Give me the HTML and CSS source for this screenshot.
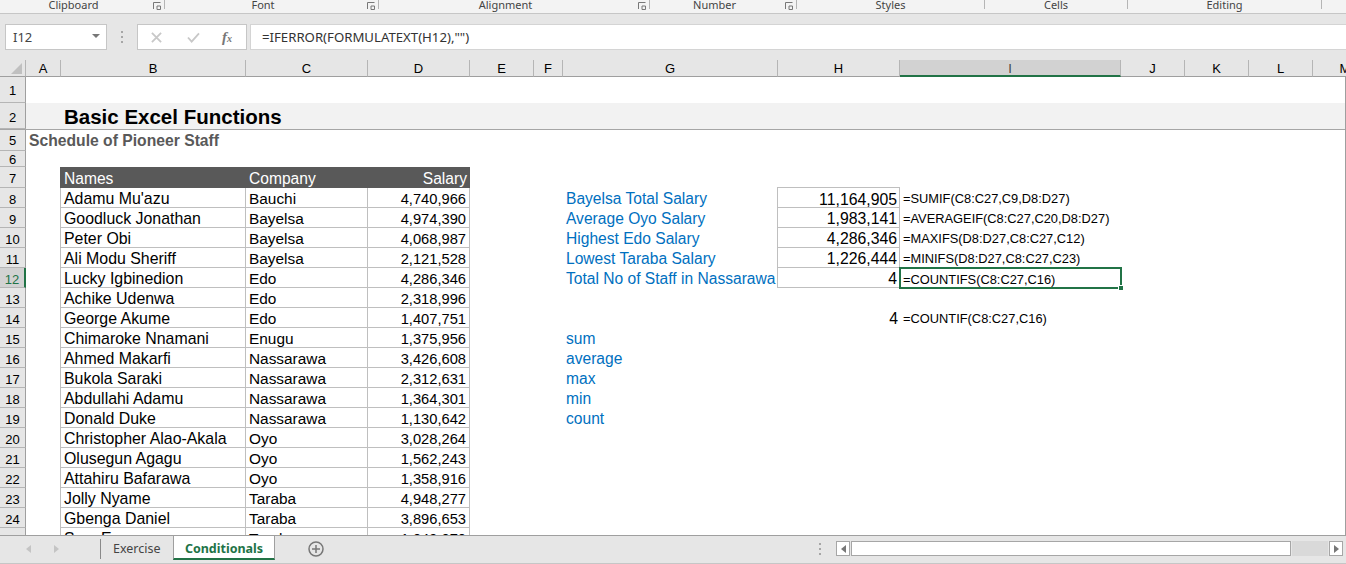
FILE: index.html
```html
<!DOCTYPE html>
<html lang="en">
<head>
    <meta charset="UTF-8">
    <title>Basic Excel Functions</title>
    <link rel="stylesheet" href="styles.css">
</head>
<body>
    <!-- Ribbon group labels -->
    <div class="ribbon">
        <div class="group launch g-clipboard">Clipboard<svg class="launcher" viewBox="0 0 8 8"><path d="M0.5 7V0.5H7.5M4 4H7.5V7.5H4Z"/></svg></div>
        <div class="group launch g-font">Font<svg class="launcher" viewBox="0 0 8 8"><path d="M0.5 7V0.5H7.5M4 4H7.5V7.5H4Z"/></svg></div>
        <div class="group launch g-alignment">Alignment<svg class="launcher" viewBox="0 0 8 8"><path d="M0.5 7V0.5H7.5M4 4H7.5V7.5H4Z"/></svg></div>
        <div class="group launch g-number">Number<svg class="launcher" viewBox="0 0 8 8"><path d="M0.5 7V0.5H7.5M4 4H7.5V7.5H4Z"/></svg></div>
        <div class="group g-styles">Styles</div>
        <div class="group g-cells">Cells</div>
        <div class="group g-editing">Editing</div>
    </div>

    <!-- Formula bar -->
    <div class="formula-bar">
        <div class="name-box">I12<span class="caret"></span></div>
        <div class="dots"><i></i><i></i><i></i></div>
        <div class="fx-buttons">
            <svg class="btn-icon" viewBox="0 0 12 12"><path d="M1 1L11 11M11 1L1 11"/></svg>
            <svg class="btn-icon" viewBox="0 0 14 12"><path d="M1 6L5 10.500L13 1.500"/></svg>
            <span class="fx">f<sub>x</sub></span>
        </div>
        <div class="formula-input">=IFERROR(FORMULATEXT(H12),"")</div>
    </div>

    <!-- Column headers -->
    <div class="row col-heads">
        <div class="corner"><svg viewBox="0 0 10 10"><polygon points="10,0 10,10 0,10"/></svg></div>
        <div class="ch">A</div><div class="ch">B</div><div class="ch">C</div><div class="ch">D</div>
        <div class="ch">E</div><div class="ch">F</div><div class="ch">G</div><div class="ch">H</div>
        <div class="ch selected">I</div><div class="ch">J</div><div class="ch">K</div><div class="ch">L</div>
        <div class="ch last">M</div>
    </div>

    <div class="sheet">
        <div class="row r1"><div class="rh">1</div></div>
        <div class="row r2"><div class="rh">2</div><div class="title">Basic Excel Functions</div></div>
        <div class="row r5"><div class="rh">5</div><div class="subtitle">Schedule of Pioneer Staff</div></div>
        <div class="row r6"><div class="rh">6</div></div>
        <div class="row r7"><div class="rh">7</div>
            <div class="th cb">Names</div><div class="th cc">Company</div><div class="th cd">Salary</div>
        </div>

        <div class="row"><div class="rh">8</div>
            <div class="td cb">Adamu Mu'azu</div><div class="td cc">Bauchi</div><div class="td cd">4,740,966</div>
            <div class="label cg">Bayelsa Total Salary</div><div class="box ch-col first">11,164,905</div><div class="formula ci">=SUMIF(C8:C27,C9,D8:D27)</div>
        </div>
        <div class="row"><div class="rh">9</div>
            <div class="td cb">Goodluck Jonathan</div><div class="td cc">Bayelsa</div><div class="td cd">4,974,390</div>
            <div class="label cg">Average Oyo Salary</div><div class="box ch-col">1,983,141</div><div class="formula ci">=AVERAGEIF(C8:C27,C20,D8:D27)</div>
        </div>
        <div class="row"><div class="rh">10</div>
            <div class="td cb">Peter Obi</div><div class="td cc">Bayelsa</div><div class="td cd">4,068,987</div>
            <div class="label cg">Highest Edo Salary</div><div class="box ch-col">4,286,346</div><div class="formula ci">=MAXIFS(D8:D27,C8:C27,C12)</div>
        </div>
        <div class="row"><div class="rh">11</div>
            <div class="td cb">Ali Modu Sheriff</div><div class="td cc">Bayelsa</div><div class="td cd">2,121,528</div>
            <div class="label cg">Lowest Taraba Salary</div><div class="box ch-col">1,226,444</div><div class="formula ci">=MINIFS(D8:D27,C8:C27,C23)</div>
        </div>
        <div class="row"><div class="rh selected">12</div>
            <div class="td cb">Lucky Igbinedion</div><div class="td cc">Edo</div><div class="td cd">4,286,346</div>
            <div class="label cg">Total No of Staff in Nassarawa</div><div class="box ch-col">4</div>
            <div class="formula ci active">=COUNTIFS(C8:C27,C16)<span class="handle"></span></div>
        </div>
        <div class="row"><div class="rh">13</div>
            <div class="td cb">Achike Udenwa</div><div class="td cc">Edo</div><div class="td cd">2,318,996</div>
        </div>
        <div class="row"><div class="rh">14</div>
            <div class="td cb">George Akume</div><div class="td cc">Edo</div><div class="td cd">1,407,751</div>
            <div class="plain ch-col">4</div><div class="formula ci">=COUNTIF(C8:C27,C16)</div>
        </div>
        <div class="row"><div class="rh">15</div>
            <div class="td cb">Chimaroke Nnamani</div><div class="td cc">Enugu</div><div class="td cd">1,375,956</div>
            <div class="label cg">sum</div>
        </div>
        <div class="row"><div class="rh">16</div>
            <div class="td cb">Ahmed Makarfi</div><div class="td cc">Nassarawa</div><div class="td cd">3,426,608</div>
            <div class="label cg">average</div>
        </div>
        <div class="row"><div class="rh">17</div>
            <div class="td cb">Bukola Saraki</div><div class="td cc">Nassarawa</div><div class="td cd">2,312,631</div>
            <div class="label cg">max</div>
        </div>
        <div class="row"><div class="rh">18</div>
            <div class="td cb">Abdullahi Adamu</div><div class="td cc">Nassarawa</div><div class="td cd">1,364,301</div>
            <div class="label cg">min</div>
        </div>
        <div class="row"><div class="rh">19</div>
            <div class="td cb">Donald Duke</div><div class="td cc">Nassarawa</div><div class="td cd">1,130,642</div>
            <div class="label cg">count</div>
        </div>
        <div class="row"><div class="rh">20</div>
            <div class="td cb">Christopher Alao-Akala</div><div class="td cc">Oyo</div><div class="td cd">3,028,264</div>
        </div>
        <div class="row"><div class="rh">21</div>
            <div class="td cb">Olusegun Agagu</div><div class="td cc">Oyo</div><div class="td cd">1,562,243</div>
        </div>
        <div class="row"><div class="rh">22</div>
            <div class="td cb">Attahiru Bafarawa</div><div class="td cc">Oyo</div><div class="td cd">1,358,916</div>
        </div>
        <div class="row"><div class="rh">23</div>
            <div class="td cb">Jolly Nyame</div><div class="td cc">Taraba</div><div class="td cd">4,948,277</div>
        </div>
        <div class="row"><div class="rh">24</div>
            <div class="td cb">Gbenga Daniel</div><div class="td cc">Taraba</div><div class="td cd">3,896,653</div>
        </div>
        <div class="row"><div class="rh">25</div>
            <div class="td cb">Sam Egwu</div><div class="td cc">Taraba</div><div class="td cd">1,049,070</div>
        </div>
    </div>

    <!-- Sheet tabs and scrollbar -->
    <div class="status">
        <svg class="nav-arrow" viewBox="0 0 5 8"><polygon points="5,0 5,8 0,4"/></svg>
        <svg class="nav-arrow" viewBox="0 0 5 8"><polygon points="0,0 0,8 5,4"/></svg>
        <div class="tab">Exercise</div>
        <div class="tab active">Conditionals</div>
        <svg class="add-sheet" viewBox="0 0 16 16"><circle cx="8" cy="8" r="7"/><path d="M8 4V12M4 8H12"/></svg>
        <div class="dots status-dots"><i></i><i></i><i></i></div>
        <div class="scrollbar">
            <div class="scroll-btn"><svg viewBox="0 0 5 8"><polygon points="5,0 5,8 0,4"/></svg></div>
            <div class="thumb"></div>
            <div class="track"></div>
            <div class="scroll-btn"><svg viewBox="0 0 5 8"><polygon points="0,0 0,8 5,4"/></svg></div>
        </div>
    </div>
</body>
</html>
```

FILE: styles.css
```css
* {
    box-sizing: border-box;
}

html, body {
    height: 100%;
}

body {
    margin: 0;
    display: flex;
    flex-direction: column;
    overflow: hidden;
    background-color: #e6e6e6;
    font-family: "Liberation Sans", Arial, sans-serif;
    font-size: 15.6px;
    color: #000;
}

/* ribbon */
.ribbon {
    display: flex;
    height: 14px;
    background-color: #f3f3f3;
    border-bottom: 1px solid #c6c6c6;
    font-family: "Noto Sans", sans-serif;
    font-size: 11px;
    line-height: 9px;
    color: #444;
}

.group {
    position: relative;
    height: 9px;
    border-right: 1px solid #b5b5b5;
    text-align: center;
    white-space: nowrap;
}

.group.launch {
    padding-right: 17px;
}

.g-clipboard { width: 165px; }
.g-font { width: 214px; }
.g-alignment { width: 271px; }
.g-number { width: 147px; }
.g-styles { width: 188px; }
.g-cells { width: 143px; }
.g-editing { width: 194px; }

.launcher {
    position: absolute;
    right: 3px;
    top: 2px;
    width: 8px;
    height: 8px;
    fill: none;
    stroke: #777;
    stroke-width: 1;
}

/* formula bar */
.formula-bar {
    display: flex;
    height: 46px;
    padding: 10px 0 10px 5px;
}

.name-box {
    position: relative;
    width: 102px;
    height: 26px;
    padding: 0 0 0 7px;
    background-color: #fff;
    border: 1px solid #c6c6c6;
    font-family: "Noto Sans", sans-serif;
    font-size: 13px;
    line-height: 24px;
    color: #444;
}

.caret {
    position: absolute;
    right: 6px;
    top: 9px;
    border-left: 4px solid transparent;
    border-right: 4px solid transparent;
    border-top: 4px solid #777;
}

.dots {
    display: flex;
    flex-direction: column;
    gap: 3px;
    width: 30px;
    align-items: center;
    justify-content: center;
}

.dots i {
    width: 2px;
    height: 2px;
    background-color: #a6a6a6;
}

.fx-buttons {
    display: flex;
    align-items: center;
    width: 110px;
    height: 26px;
    padding-left: 13px;
    background-color: #fff;
    border: 1px solid #c6c6c6;
}

.btn-icon {
    width: 11px;
    height: 11px;
    margin-right: 25px;
    fill: none;
    stroke: #c8c8c8;
    stroke-width: 2;
}

.btn-icon + .btn-icon {
    width: 13px;
    margin-right: 22px;
}

.fx {
    font-family: "Liberation Serif", serif;
    font-style: italic;
    font-weight: bold;
    font-size: 15px;
    color: #777;
}

.fx sub {
    font-size: 10px;
    vertical-align: baseline;
}

.formula-input {
    flex: 1;
    height: 26px;
    margin-left: 3px;
    padding-left: 11px;
    background-color: #fff;
    border: 1px solid #d4d4d4;
    border-right: 0;
    font-family: "Noto Sans", sans-serif;
    font-size: 13.2px;
    line-height: 24px;
    color: #333;
}

/* shared column grid */
.row {
    display: grid;
    grid-template-columns: 26px 35px 185px 122px 102px 64px 29px 215px 122px 221px 64px 64px 64px 64px;
    grid-template-rows: 100%;
    height: 20px;
}

.cb { grid-column: 3; }
.cc { grid-column: 4; }
.cd { grid-column: 5; }
.cg { grid-column: 8; }
.ch-col { grid-column: 9; }
.ci { grid-column: 10; }

/* column headers */
.col-heads {
    flex: none;
    height: 17px;
    overflow: hidden;
    background-color: #e6e6e6;
}

.corner {
    display: flex;
    align-items: flex-end;
    justify-content: flex-end;
    padding: 0 3px 2px 0;
    border-right: 1px solid #b5b5b5;
    border-bottom: 1px solid #9f9f9f;
}

.corner svg {
    width: 11px;
    height: 11px;
    fill: #c0c0c0;
}

.ch {
    border-right: 1px solid #b5b5b5;
    border-bottom: 1px solid #9f9f9f;
    text-align: center;
    font-size: 13px;
    line-height: 17px;
    overflow: hidden;
}

.ch.selected {
    background-color: #d2d2d2;
    border-bottom: 2px solid #217346;
    color: #444;
}

.ch.last {
    border-right: 0;
}

/* sheet */
.sheet {
    flex: 1;
    min-height: 0;
    overflow: hidden;
    background-color: #fff;
    border-right: 1px solid #9f9f9f;
}

.rh {
    background-color: #e6e6e6;
    border-right: 1px solid #9f9f9f;
    border-bottom: 1px solid #b5b5b5;
    text-align: center;
    font-size: 13px;
    line-height: 23px;
}

.rh.selected {
    background-color: #d2d2d2;
    border-right: 2px solid #217346;
    color: #217346;
}

.r1 { height: 26px; }
.r2 { height: 27px; background-color: #f2f2f2; border-bottom: 1px solid #a6a6a6; }
.r5 { height: 21px; }
.r6 { height: 16px; }
.r7 { height: 21px; }

.r1 .rh { line-height: 27px; }
.r2 .rh { line-height: 29px; }
.r5 .rh { line-height: 22px; }
.r6 .rh { line-height: 17px; }
.r7 .rh { line-height: 24px; }

.title {
    grid-column: 3 / 7;
    padding-left: 3px;
    font-size: 20.5px;
    font-weight: bold;
    line-height: 27px;
}

.subtitle {
    grid-column: 2 / 6;
    padding-left: 3px;
    font-size: 15.7px;
    font-weight: bold;
    line-height: 22px;
    color: #595959;
    white-space: nowrap;
}

.th, .td, .box, .plain, .label, .formula {
    padding: 0 3px;
    line-height: 22px;
    white-space: nowrap;
}

.th {
    background-color: #595959;
    line-height: 24px;
    color: #fff;
}

.th.cb {
    margin-left: -1px;
    padding-left: 4px;
}

.td {
    border-right: 1px solid #bfbfbf;
    border-bottom: 1px solid #bfbfbf;
}

.td.cb {
    margin-left: -1px;
    font-size: 15.900px;
    border-left: 1px solid #bfbfbf;
}

.td.cc {
    font-size: 15.400px;
}

.cd {
    text-align: right;
}

.td.cd {
    font-size: 14.700px;
}

.box, .plain {
    padding-right: 2px;
    text-align: right;
    font-size: 15.800px;
}

.box {
    margin-left: -1px;
    border: 1px solid #bfbfbf;
    border-top: 0;
}

.box.first {
    height: 21px;
    margin-top: -1px;
    border-top: 1px solid #bfbfbf;
    line-height: 23px;
}

.label {
    color: #0070c0;
}

.formula {
    font-size: 12.850px;
}

.formula.active {
    position: relative;
    height: 22px;
    margin: -1px -1px 0 -1px;
    padding-left: 2px;
    border: 2px solid #217346;
    line-height: 21px;
}

.handle {
    position: absolute;
    right: -4px;
    bottom: -4px;
    width: 6px;
    height: 6px;
    background-color: #217346;
    border: 1px solid #fff;
}

/* status bar */
.status {
    flex: none;
    display: flex;
    align-items: center;
    height: 29px;
    padding: 0 3px 2px 26px;
    border-top: 1px solid #9f9f9f;
    border-bottom: 1px solid #c6c6c6;
    font-family: "Noto Sans", sans-serif;
    font-size: 12.500px;
}

.nav-arrow {
    width: 5px;
    height: 8px;
    margin-right: 23px;
    fill: #c4c4c4;
}

.tab {
    align-self: flex-start;
    width: 73px;
    height: 20px;
    margin: 3px 0 0 18px;
    padding-left: 12px;
    line-height: 20px;
    border-left: 1px solid #8a8a8a;
    color: #444;
}

.tab.active {
    width: 102px;
    height: 24px;
    margin: 0;
    padding: 3px 0 0;
    text-align: center;
    line-height: 20px;
    background-color: #fff;
    border-right: 1px solid #9f9f9f;
    border-left: 1px solid #9f9f9f;
    border-bottom: 2px solid #217346;
    font-weight: bold;
    color: #217346;
}

.add-sheet {
    width: 16px;
    height: 16px;
    margin-left: 33px;
    fill: none;
    stroke: #777;
    stroke-width: 1.500;
}

.status-dots {
    width: 18px;
    margin-left: auto;
    margin-right: 7px;
}

.scrollbar {
    display: flex;
    align-items: center;
    gap: 1px;
    width: 507px;
    height: 15px;
}

.scroll-btn {
    display: flex;
    align-items: center;
    justify-content: center;
    width: 14px;
    height: 15px;
    background-color: #fff;
    border: 1px solid #a6a6a6;
}

.scroll-btn svg {
    width: 5px;
    height: 8px;
    fill: #777;
}

.thumb {
    width: 440px;
    height: 15px;
    background-color: #fff;
    border: 1px solid #a6a6a6;
}

.track {
    flex: 1;
    height: 15px;
    background-color: #d9d9d9;
}
```
